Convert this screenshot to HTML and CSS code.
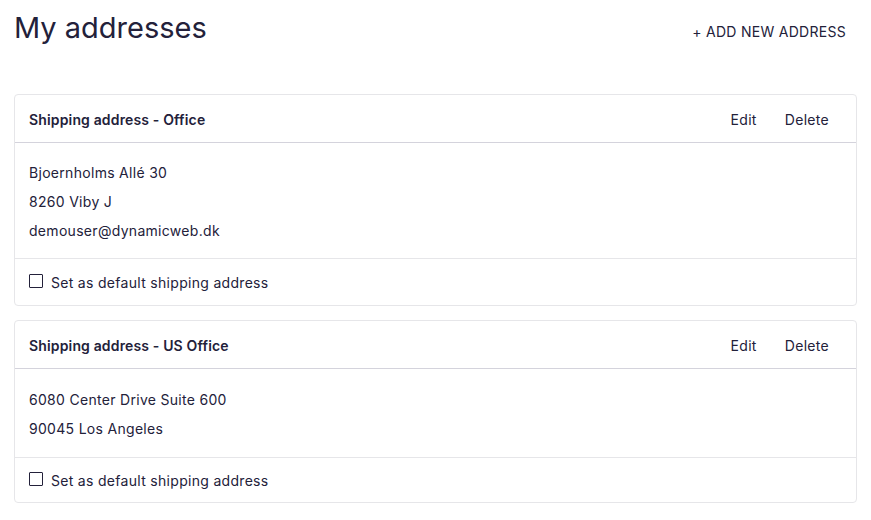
FILE: index.html
```html
<!DOCTYPE html>
<html lang="en">
<head>
<meta charset="utf-8">
<title>My addresses</title>
<link rel="stylesheet" href="styles.css">
</head>
<body>
<div class="page">
  <div class="page-head">
    <h1 class="page-title">My addresses</h1>
    <a class="add-link" href="#">+ ADD NEW ADDRESS</a>
  </div>
  <div class="cards">
    <section class="card">
      <header class="card-head">
        <h2 class="card-title">Shipping address - Office</h2>
        <div class="actions">
          <a class="action" href="#">Edit</a>
          <a class="action" href="#">Delete</a>
        </div>
      </header>
      <div class="card-body">
        <div class="line">Bjoernholms Allé 30</div>
        <div class="line">8260 Viby J</div>
        <div class="line">demouser@dynamicweb.dk</div>
      </div>
      <footer class="card-foot">
        <label class="check"><span class="box"></span>Set as default shipping address</label>
      </footer>
    </section>
    <section class="card">
      <header class="card-head">
        <h2 class="card-title">Shipping address - US Office</h2>
        <div class="actions">
          <a class="action" href="#">Edit</a>
          <a class="action" href="#">Delete</a>
        </div>
      </header>
      <div class="card-body card-body-2">
        <div class="line">6080 Center Drive Suite 600</div>
        <div class="line">90045 Los Angeles</div>
      </div>
      <footer class="card-foot card-foot-2">
        <label class="check"><span class="box"></span>Set as default shipping address</label>
      </footer>
    </section>
  </div>
</div>
</body>
</html>
```
FILE: styles.css
```css
* { box-sizing: border-box; }
html, body { margin: 0; padding: 0; background: #fff; }
body {
  font-family: Inter, "Noto Sans", sans-serif;
  color: #23213a;
  font-size: 14px;
  letter-spacing: 0.3px;
}
.page { padding: 0 14px 0 14px; width: 871px; }
.page-head {
  display: flex;
  justify-content: space-between;
  align-items: flex-start;
  height: 94px;
}
.page-title {
  margin: 9px 0 0 0;
  font-size: 29px;
  font-weight: 400;
  line-height: 38px;
  letter-spacing: 0;
}
.add-link {
  margin: 22px 11px 0 0;
  font-size: 14px;
  line-height: 20px;
  color: #23213a;
  text-decoration: none;
  letter-spacing: 0.28px;
}
.cards { display: flex; flex-direction: column; gap: 14px; }
.card {
  border: 1px solid #e6e6e9;
  border-radius: 4px;
}
.card-head {
  display: flex;
  justify-content: space-between;
  align-items: center;
  height: 48px;
  padding: 2px 13px 0 14px;
  border-bottom: 1px solid #d4d3dc;
}
.card-title {
  margin: 0;
  font-size: 14px;
  font-weight: 600;
  line-height: 20px;
  letter-spacing: 0.15px;
}
.actions { display: flex; }
.action {
  padding: 0 14px;
  color: #23213a;
  text-decoration: none;
  font-size: 14px;
  line-height: 20px;
}
.card-body { padding: 15px 14px 13px 14px; }
.card-body-2 { padding: 16px 14px 14px 14px; }
.line { line-height: 29px; }
.card-foot {
  border-top: 1px solid #e6e6e9;
  padding: 13px 14px 11px 14px;
}
.card-foot-2 { padding: 12px 14px 10px 14px; }
.check {
  display: flex;
  align-items: center;
  line-height: 22px;
}
.box {
  width: 14px;
  height: 14px;
  border: 1px solid #23213a;
  border-radius: 1px;
  margin: -4px 8px 0 0;
  flex: none;
}
```
